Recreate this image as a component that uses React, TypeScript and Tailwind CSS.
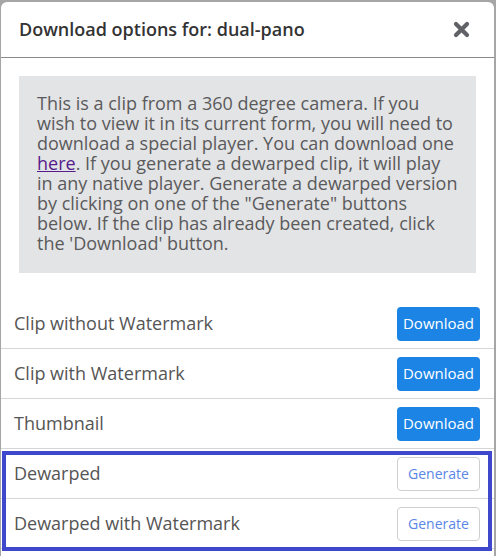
import React from "react";

// Download dialog for a 360 clip: intro note, then a row per asset.
const rows: { label: string; action: "download" | "generate" }[] = [
  { label: "Clip without Watermark", action: "download" },
  { label: "Clip with Watermark", action: "download" },
  { label: "Thumbnail", action: "download" },
  { label: "Dewarped", action: "generate" },
  { label: "Dewarped with Watermark", action: "generate" },
];

const CloseIcon: React.FC = () => (
  <svg width="17" height="17" viewBox="0 0 17 17" aria-hidden>
    <path d="M3 3 L14 14 M14 3 L3 14" stroke="#5f6166" strokeWidth="4.2" strokeLinecap="round" />
  </svg>
);

const Row: React.FC<{ label: string; action: "download" | "generate" }> = ({ label, action }) => (
  <div className="h-[50px] flex items-center justify-between pl-[13px] pr-[14px] border-b border-[#d6d6d6]">
    <span className="text-[18px] text-[#555]">{label}</span>
    {action === "download" ? (
      <button className="w-[83px] h-[34px] rounded-[4px] bg-[#1b84e5] text-white text-[15px]">Download</button>
    ) : (
      <button className="w-[83px] h-[34px] rounded-[4px] bg-white border border-[#cfcfcf] text-[#5a86e6] text-[14px]">
        Generate
      </button>
    )}
  </div>
);

export default function App() {
  return (
    <div
      className="w-[496px] h-[556px] bg-[#a6a6a6] pt-[2px] pl-[1px] pr-[2px] overflow-hidden relative"
      style={{ fontFamily: '"Open Sans", "Liberation Sans", sans-serif' }}
    >
      <div className="bg-white rounded-t-[6px] h-[560px]">
        <div className="h-[56px] flex items-center justify-between pl-[18px] pr-[24px] border-b border-[#8a8a8a]">
          <h2 className="text-[18px] font-semibold text-[#333]">Download options for: dual-pano</h2>
          <CloseIcon />
        </div>
        <div className="pt-[18px] px-[18px]">
          <div className="bg-[#e3e4e5] pt-[17px] pb-[20px] pl-[18px] pr-[17px] text-[18px] leading-[20px] text-[#5a5a5c]">
            This is a clip from a 360 degree camera. If you wish to view it in its current form, you will need to
            download a special player. You can download one{" "}
            <a href="#" className="text-[#551a8b] underline">
              here
            </a>
            . If you generate a dewarped clip, it will play in any native player. Generate a dewarped version by
            clicking on one of the "Generate" buttons below. If the clip has already been created, click the
            'Download' button.
          </div>
        </div>
        <div className="mt-[26px]">
          {rows.map((r) => (
            <Row key={r.label} label={r.label} action={r.action} />
          ))}
        </div>
      </div>
      {/* highlight box drawn over the two generate rows */}
      <div className="absolute left-[2px] top-[451px] w-[490px] h-[100px] border-4 border-[#3f48cc] pointer-events-none" />
    </div>
  );
}
